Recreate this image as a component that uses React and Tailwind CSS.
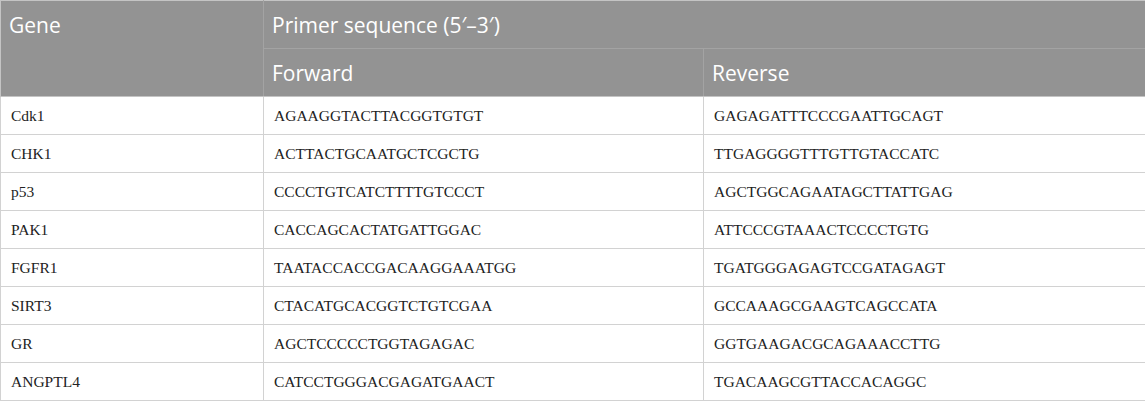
import React from "react";

const rows = [
  ["Cdk1", "AGAAGGTACTTACGGTGTGT", "GAGAGATTTCCCGAATTGCAGT"],
  ["CHK1", "ACTTACTGCAATGCTCGCTG", "TTGAGGGGTTTGTTGTACCATC"],
  ["p53", "CCCCTGTCATCTTTTGTCCCT", "AGCTGGCAGAATAGCTTATTGAG"],
  ["PAK1", "CACCAGCACTATGATTGGAC", "ATTCCCGTAAACTCCCCTGTG"],
  ["FGFR1", "TAATACCACCGACAAGGAAATGG", "TGATGGGAGAGTCCGATAGAGT"],
  ["SIRT3", "CTACATGCACGGTCTGTCGAA", "GCCAAAGCGAAGTCAGCCATA"],
  ["GR", "AGCTCCCCCTGGTAGAGAC", "GGTGAAGACGCAGAAACCTTG"],
  ["ANGPTL4", "CATCCTGGGACGAGATGAACT", "TGACAAGCGTTACCACAGGC"],
];

export default function App() {
  return (
    <div className="w-[1145px] h-[404px] bg-white">
      <table className="w-[1145px] table-fixed border-collapse">
        <colgroup>
          <col className="w-[263px]" />
          <col className="w-[440px]" />
          <col className="w-[442px]" />
        </colgroup>
        <thead className="font-['Open_Sans',sans-serif] text-[21px] leading-[28px] font-normal text-white">
          <tr className="h-[48px]">
            <th
              rowSpan={2}
              className="bg-[#939393] border border-[#c4c4c4] border-r-[#a3a3a3] align-top pt-[10px] pl-[8px] text-left font-normal"
            >
              Gene
            </th>
            <th
              colSpan={2}
              className="bg-[#939393] border border-[#c4c4c4] border-b-[#a3a3a3] pl-[8px] text-left font-normal"
            >
              Primer sequence (5′–3′)
            </th>
          </tr>
          <tr className="h-[48px]">
            <th className="bg-[#939393] border border-[#c4c4c4] border-r-[#a3a3a3] border-t-[#a3a3a3] pl-[8px] text-left font-normal">
              Forward
            </th>
            <th className="bg-[#939393] border border-[#c4c4c4] border-t-[#a3a3a3] pl-[8px] text-left font-normal">
              Reverse
            </th>
          </tr>
        </thead>
        <tbody className="font-['Liberation_Serif',serif] text-[15.5px] text-[#222222]">
          {rows.map((r) => (
            <tr key={r[0]} className="h-[38px]">
              {r.map((c, i) => (
                <td key={i} className="border border-[#d2d2d2] pl-[10px] text-left">
                  {c}
                </td>
              ))}
            </tr>
          ))}
        </tbody>
      </table>
    </div>
  );
}
